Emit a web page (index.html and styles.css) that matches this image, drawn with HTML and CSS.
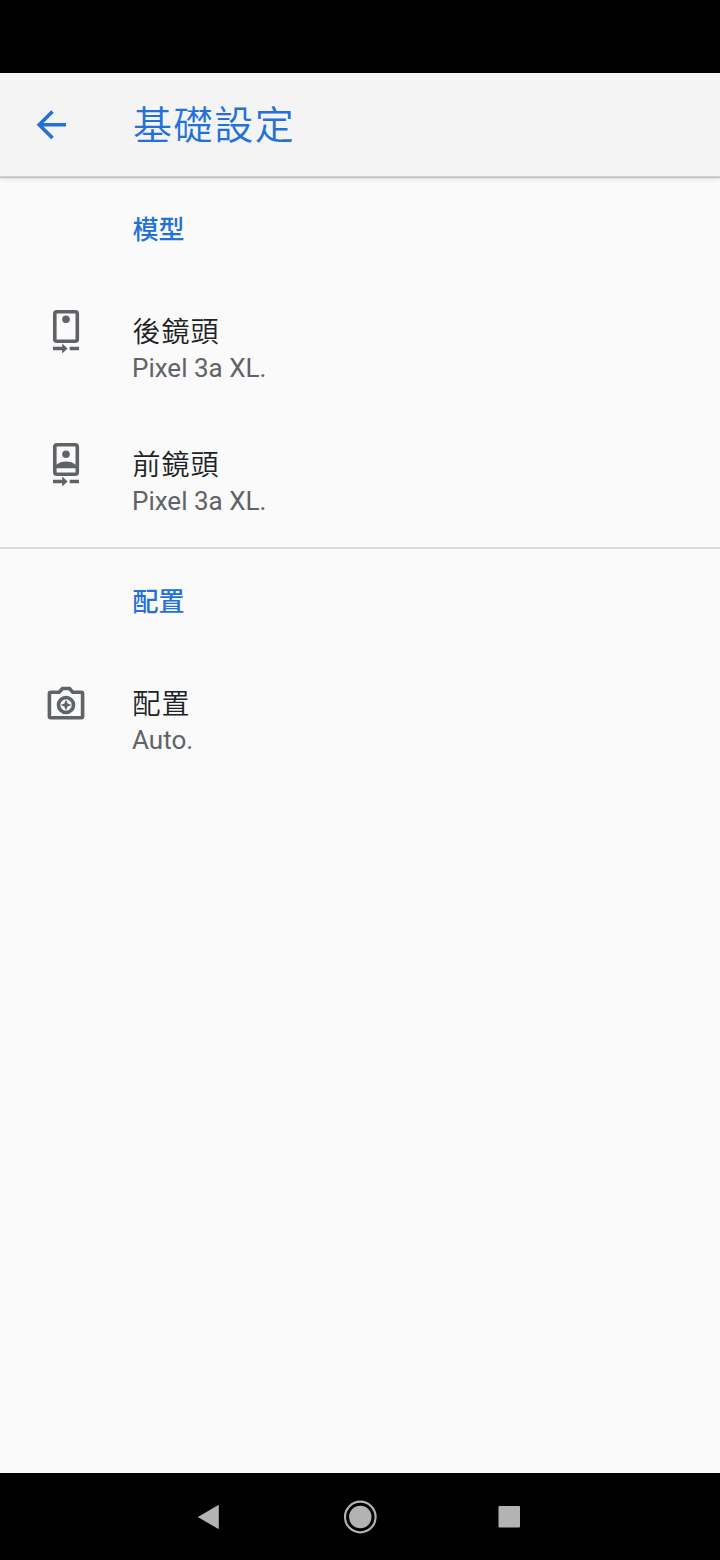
FILE: index.html
```html
<!DOCTYPE html>
<html lang="zh-Hant">
<head>
  <meta charset="UTF-8">
  <title>基礎設定</title>
  <link rel="stylesheet" href="styles.css">
</head>
<body>

  <div class="status-bar"></div>

  <header class="toolbar">
    <svg class="back-icon" width="32" height="32" viewBox="0 0 32 32">
      <path d="M31 15.8H4.5M17.5 2.5L4.2 15.8L17.5 29.1" />
    </svg>
    <h1>基礎設定</h1>
  </header>

  <main>
    <section>
      <h2>模型</h2>
      <div class="item">
        <svg class="item-icon" width="40" height="48" viewBox="0 0 40 48">
          <rect class="line" x="8.8" y="4.8" width="22.5" height="29.5" rx="2" />
          <circle cx="20" cy="12.3" r="3.8" />
          <path d="M7 39.8h9.2v-3.3l5.4 5l-5.4 5v-3.3H7zM23.7 39.8H33v3.4h-9.3z" />
        </svg>
        <div class="item-text">
          <div class="name">後鏡頭</div>
          <div class="value">Pixel 3a XL.</div>
        </div>
      </div>
      <div class="item">
        <svg class="item-icon" width="40" height="48" viewBox="0 0 40 48">
          <rect class="line" x="8.8" y="4.8" width="22.5" height="29.5" rx="2" />
          <circle cx="20" cy="14.3" r="3.8" />
          <path d="M10 25c3-2.3 6-3.4 10-3.4s7 1.1 10 3.4v3.3H10z" />
          <path d="M7 39.8h9.2v-3.3l5.4 5l-5.4 5v-3.3H7zM23.7 39.8H33v3.4h-9.3z" />
        </svg>
        <div class="item-text">
          <div class="name">前鏡頭</div>
          <div class="value">Pixel 3a XL.</div>
        </div>
      </div>
    </section>

    <section>
      <h2>配置</h2>
      <div class="item">
        <svg class="item-icon" width="40" height="48" viewBox="0 0 40 48">
          <path class="line" d="M4.8 13.2h8.4l3.3-3.7h7l3.3 3.7h8.4q1.4 0 1.4 1.500v22.500q0 1.500-1.400 1.500H4.800q-1.400 0-1.400-1.500v-22.500q0-1.500 1.400-1.500z" />
          <circle class="line" cx="20" cy="26" r="7.5" />
          <path d="M20 20.500l1.600 3.900l3.900 1.600l-3.900 1.600l-1.600 3.900l-1.600-3.900l-3.900-1.600l3.900-1.600z" />
        </svg>
        <div class="item-text">
          <div class="name">配置</div>
          <div class="value">Auto.</div>
        </div>
      </div>
    </section>
  </main>

  <nav class="nav-bar">
    <svg width="36" height="36" viewBox="0 0 36 36">
      <path d="M4.8 18L25 6.2q.8-.3.8.5v22.6q0 .8-.8.5z" />
    </svg>
    <svg width="36" height="36" viewBox="0 0 36 36">
      <circle class="ring" cx="18.3" cy="18" r="15.3" />
      <circle cx="18.3" cy="18" r="11.2" />
    </svg>
    <svg width="36" height="36" viewBox="0 0 36 36">
      <rect x="7.5" y="7" width="21.5" height="21.5" rx="1" />
    </svg>
  </nav>

</body>
</html>
```

FILE: styles.css
```css
* {
  box-sizing: border-box;
}

body {
  margin: 0;
  height: 1560px;
  display: flex;
  flex-direction: column;
  background: #fafafa;
  font-family: Roboto, "Noto Sans CJK TC", sans-serif;
}

.status-bar {
  height: 73px;
  background: #000;
}

.toolbar {
  height: 104px;
  display: flex;
  align-items: center;
  padding-left: 35px;
  background: #f4f4f4;
  border-bottom: 1px solid #d0d0d0;
  box-shadow: 0 1px 1px #c4c4c4, 0 2px 5px rgba(0, 0, 0, 0.1);
}

.back-icon {
  fill: none;
  stroke: #2370d8;
  stroke-width: 3.6;
}

h1 {
  margin: 0 0 0 66px;
  padding-top: 2px;
  font-size: 39px;
  line-height: 56px;
  font-weight: 350;
  letter-spacing: 1.6px;
  color: #2370d8;
}

main {
  flex: 1;
}

section {
  padding-top: 33px;
  height: 370px;
}

section + section {
  border-top: 2px solid #dcdcdc;
}

h2 {
  margin: 0 0 56px 132.5px;
  font-size: 26px;
  line-height: 40px;
  font-weight: 500;
  color: #2370d8;
}

.item {
  height: 133px;
  display: flex;
}

.item-icon {
  margin: 1px 46px 0;
  fill: #5f6368;
}

.item-icon .line {
  fill: none;
  stroke: #5f6368;
  stroke-width: 3.6;
}

.name {
  margin-top: 8px;
  font-size: 28px;
  line-height: 38px;
  font-weight: 350;
  letter-spacing: 1px;
  text-indent: 0.5px;
  color: #202124;
}

.value {
  margin-top: -2px;
  font-size: 26px;
  line-height: 36px;
  color: #5f6368;
}

.nav-bar {
  height: 87px;
  display: flex;
  align-items: center;
  justify-content: center;
  gap: 113px;
  background: #000;
  fill: #b3b3b3;
}

.nav-bar .ring {
  fill: none;
  stroke: #b3b3b3;
  stroke-width: 2.2;
}
```
